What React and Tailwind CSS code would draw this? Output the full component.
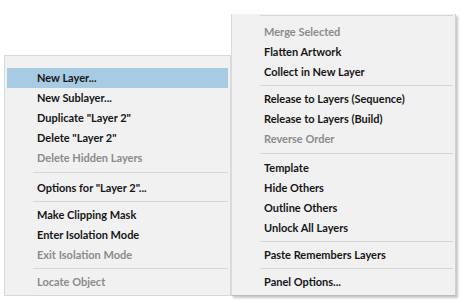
const leftItems = [
  { label: "New Layer...", active: true },
  { label: "New Sublayer..." },
  { label: 'Duplicate "Layer 2"' },
  { label: 'Delete "Layer 2"' },
  { label: "Delete Hidden Layers", disabled: true },
  { sep: "mt-[4px] mb-[5px]" },
  { label: 'Options for "Layer 2"...' },
  { sep: "mt-[3px] mb-[3px]" },
  { label: "Make Clipping Mask" },
  { label: "Enter Isolation Mode" },
  { label: "Exit Isolation Mode", disabled: true },
  { sep: "mt-[3px] mb-[3px]" },
  { label: "Locate Object", disabled: true },
  { sep: "mt-[3px] mb-[1px]" },
];

const rightItems = [
  { sep: "mt-[1px] mb-[6px]" },
  { label: "Merge Selected", disabled: true },
  { label: "Flatten Artwork" },
  { label: "Collect in New Layer" },
  { sep: "mt-[3px] mb-[3px]" },
  { label: "Release to Layers (Sequence)" },
  { label: "Release to Layers (Build)" },
  { label: "Reverse Order", disabled: true },
  { sep: "mt-[4px] mb-[4px]" },
  { label: "Template" },
  { label: "Hide Others" },
  { label: "Outline Others" },
  { label: "Unlock All Layers" },
  { sep: "mt-[3px] mb-[3px]" },
  { label: "Paste Remembers Layers" },
  { sep: "mt-[3px] mb-[3px]" },
  { label: "Panel Options..." },
];

function MenuItems({ items }) {
  return items.map((item, i) =>
    item.sep ? (
      <div key={i} className={`h-px bg-[#d6d6d6] ml-[28px] mr-[2px] ${item.sep}`} />
    ) : (
      <div
        key={i}
        className={`h-[20px] mx-[2px] pl-[30px] flex items-center whitespace-nowrap ${
          item.active ? "bg-[#a8cbe4]" : ""
        } ${item.disabled ? "text-[#8b8b8b]" : "text-[#161616]"}`}
      >
        {item.label}
      </div>
    )
  );
}

export default function App() {
  return (
    <div
      className="w-[461px] h-[301px] bg-white flex items-start overflow-hidden text-[11px] font-bold"
      style={{ fontFamily: 'Lato, "Noto Sans", sans-serif' }}
    >
      <div className="ml-[4px] mt-[55px] w-[227px] h-[241px] bg-[#f1f1f1] border border-[#d9d9d9] pt-[12px]">
        <MenuItems items={leftItems} />
      </div>
      <div className="mt-[14px] w-[225px] h-[282px] bg-[#f1f1f1] border-l border-[#d9d9d9] border-r border-b border-r-[#cfcfcf] border-b-[#bdbdbd] shadow-[2px_2px_2px_rgba(0,0,0,0.22)]">
        <MenuItems items={rightItems} />
      </div>
    </div>
  );
}
